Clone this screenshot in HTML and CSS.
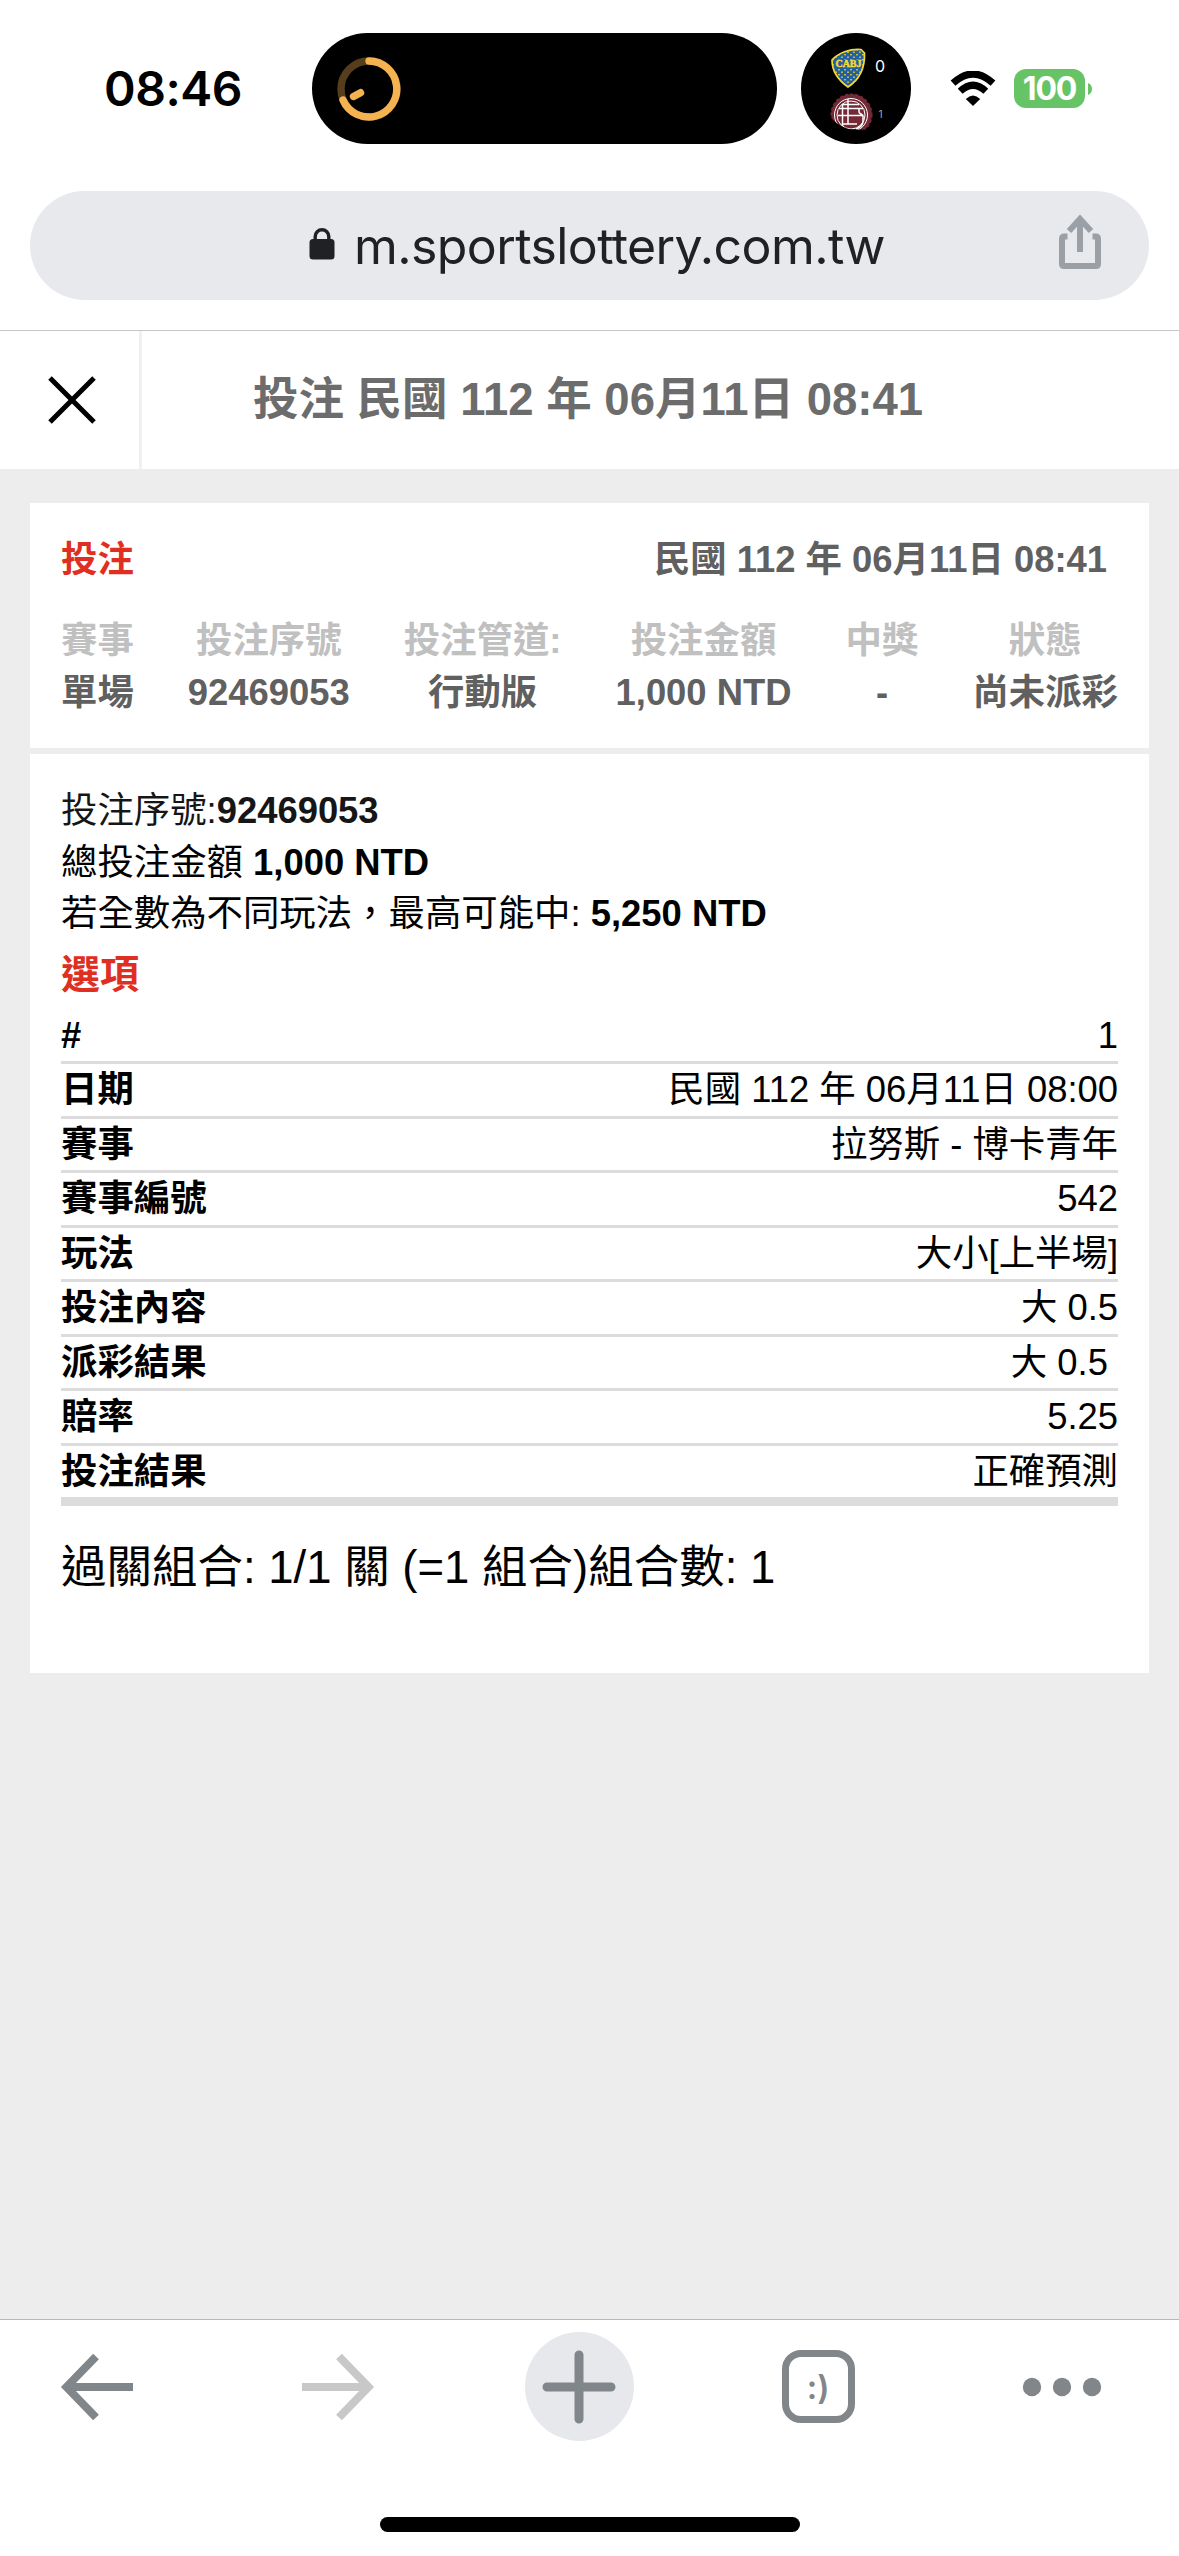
FILE: index.html
```html
<!DOCTYPE html>
<html lang="zh-Hant">
<head>
    <meta charset="UTF-8">
    <meta name="viewport" content="width=device-width, initial-scale=1.0">
    <title>投注</title>
    <link rel="stylesheet" href="styles.css">
</head>
<body>

<div class="status-bar">
    <div class="time">08:46</div>
    <div class="island">
        <svg width="64" height="64" viewBox="0 0 64 64" fill="none" stroke-linecap="round">
            <circle cx="32" cy="32" r="28" stroke="#563d1c" stroke-width="7.4"/>
            <path d="M32 4A28 28 0 1 1 6 43" stroke="#f4b250" stroke-width="7.4"/>
            <path d="M16.5 39.5L23.5 35.7" stroke="#f4b250" stroke-width="7.4"/>
        </svg>
    </div>
    <svg class="match" width="110" height="111" viewBox="0 0 110 111">
        <defs>
            <pattern id="stars" width="6" height="5" patternUnits="userSpaceOnUse">
                <rect width="6" height="5" fill="#23609f"/>
                <rect x="1" y="1" width="2" height="1.4" fill="#c5bd45"/>
                <rect x="4" y="3.5" width="2" height="1.4" fill="#c5bd45"/>
            </pattern>
            <clipPath id="crest-clip"><path d="M28 82C28 68 37 58 52 58H76V96.500H54Q38 96 28 82Z"/></clipPath>
        </defs>
        <ellipse cx="55" cy="55.500" rx="55" ry="55.500" fill="#000"/>
        <path d="M31 27C37 20 49 15.500 60 16.500L63.500 20C64 35 58 47 47 54C37 47 31 37 31 27Z" fill="url(#stars)" stroke="#f3d936" stroke-width="1.700"/>
        <rect x="34" y="26.500" width="27" height="8.500" fill="#23609f"/>
        <text class="crest-name" x="47.500" y="34" text-anchor="middle" textLength="26" lengthAdjust="spacingAndGlyphs">CABJ</text>
        <g clip-path="url(#crest-clip)" fill="none" stroke="#fff">
            <circle cx="50.500" cy="81.500" r="19" fill="#732a36" stroke="#732a36" stroke-width="2.500"/>
            <circle cx="50.500" cy="81.500" r="20.300" stroke="#732a36" stroke-width="1.500" stroke-dasharray="3.200 2"/>
            <circle cx="50" cy="82" r="16.500" stroke-width="1"/>
            <circle cx="50" cy="82" r="14" stroke-width="1"/>
            <path d="M47 66V91M41.500 71.500V93M38 75.500H62M41 71.500H58M58 75.500V79C58 81 62 81 62 83V89Q61 94 55 96M37 82.500H62M41 91H56" stroke-width="1.500"/>
        </g>
        <text class="score" x="79" y="39" text-anchor="middle">0</text>
        <text class="score score-dim" x="79.500" y="85" text-anchor="middle">1</text>
    </svg>
    <svg class="wifi" width="46" height="36" viewBox="0 0 46 36">
        <path d="M3 12.200Q23-6.200 43 12.200" fill="none" stroke="#000" stroke-width="7"/>
        <path d="M10.200 20.300Q23 8.200 35.800 20.300" fill="none" stroke="#000" stroke-width="7"/>
        <path d="M15.800 28Q23 21 30.200 28L23 35Z"/>
    </svg>
    <div class="battery">100</div>
    <svg width="5" height="12" viewBox="0 0 5 12"><path d="M0 0Q4 1.500 4 6T0 12Z" fill="#67c466"/></svg>
</div>

<div class="address-row">
    <div class="address-bar">
        <svg class="lock" width="26" height="32" viewBox="0 0 26 32">
            <path d="M6.200 12V8.500a6.800 6.800 0 0 1 13.600 0V12" fill="none" stroke="#202125" stroke-width="3.400"/>
            <rect x="0.500" y="11" width="25" height="20.500" rx="3.500" fill="#202125"/>
        </svg>
        <span class="url">m.sportslottery.com.tw</span>
        <svg class="share" width="44" height="56" viewBox="0 0 44 56" fill="none" stroke="#9aa0a5" stroke-width="6">
            <path d="M9.500 22.500H6Q4 22.500 4 25V50Q4 52 6 52H38Q40 52 40 50V25Q40 22.500 38 22.500H34.500"/>
            <path d="M22 38V6M11 17L22 5L33 17"/>
        </svg>
    </div>
</div>

<div class="page-header">
    <button class="close">
        <svg width="48" height="48" viewBox="0 0 48 48" stroke="#000" stroke-width="5"><path d="M2 2L46 46M46 2L2 46"/></svg>
    </button>
    <h1>投注 民國 112 年 06月11日 08:41</h1>
</div>

<div class="content">
    <div class="card summary">
        <div class="summary-top">
            <span class="red">投注</span>
            <span>民國 112 年 06月11日 08:41</span>
        </div>
        <div class="summary-cols">
            <div><span class="label">賽事</span><span>單場</span></div>
            <div><span class="label">投注序號</span><span>92469053</span></div>
            <div><span class="label">投注管道:</span><span>行動版</span></div>
            <div><span class="label">投注金額</span><span>1,000 NTD</span></div>
            <div><span class="label">中獎</span><span>-</span></div>
            <div><span class="label">狀態</span><span>尚未派彩</span></div>
        </div>
    </div>

    <div class="card details">
        <p class="serial">投注序號:<b>92469053</b></p>
        <p>總投注金額 <b>1,000 NTD</b></p>
        <p>若全數為不同玩法，最高可能中: <b>5,250 NTD</b></p>
        <h2 class="red">選項</h2>
        <div class="options">
            <div class="option"><b>#</b><span>1</span></div>
            <div class="option"><b>日期</b><span>民國 112 年 06月11日 08:00</span></div>
            <div class="option"><b>賽事</b><span>拉努斯 - 博卡青年</span></div>
            <div class="option"><b>賽事編號</b><span>542</span></div>
            <div class="option"><b>玩法</b><span>大小[上半場]</span></div>
            <div class="option"><b>投注內容</b><span>大 0.5</span></div>
            <div class="option"><b>派彩結果</b><span>大 0.5&nbsp;</span></div>
            <div class="option"><b>賠率</b><span>5.25</span></div>
            <div class="option"><b>投注結果</b><span>正確預測</span></div>
        </div>
        <div class="combo">過關組合: 1/1 關 (=1 組合)組合數: 1</div>
    </div>
</div>

<div class="toolbar">
    <div class="nav">
        <button>
            <svg width="74" height="68" viewBox="0 0 74 68" fill="none" stroke="#80868a" stroke-width="8"><path d="M73 34H9M36 3.500L6.500 34L36 64.500"/></svg>
        </button>
        <button>
            <svg width="74" height="68" viewBox="0 0 74 68" fill="none" stroke="#c8c8c8" stroke-width="8"><path d="M1 34H65M38 3.500L67.500 34L38 64.500"/></svg>
        </button>
        <button class="new-tab">
            <svg width="74" height="74" viewBox="0 0 74 74" stroke="#80868a" stroke-width="9" stroke-linecap="round"><path d="M5 37H69M37 5V69"/></svg>
        </button>
        <button class="tabs">:)</button>
        <button>
            <svg width="80" height="20" viewBox="0 0 80 20" fill="#80868a"><circle cx="10" cy="10" r="9.200"/><circle cx="40" cy="10" r="9.200"/><circle cx="70" cy="10" r="9.200"/></svg>
        </button>
    </div>
    <div class="home-indicator"></div>
</div>

</body>
</html>
```

FILE: styles.css
```css
* {
    box-sizing: border-box;
}

body {
    margin: 0;
    width: 1179px;
    height: 2556px;
    display: flex;
    flex-direction: column;
    overflow: hidden;
    background-color: #fff;
    color: #000;
    font-family: 'Liberation Sans', 'Noto Sans CJK TC', sans-serif;
    font-size: 36.4px;
}

svg {
    display: block;
    flex-shrink: 0;
}

button {
    background: none;
    border: none;
    padding: 0;
    display: flex;
    align-items: center;
    justify-content: center;
}

h1, h2, p {
    margin: 0;
}

/* status bar */
.status-bar {
    height: 144px;
    padding-top: 33px;
    flex-shrink: 0;
    display: flex;
    align-items: center;
}

.time {
    width: 312px;
    padding-left: 104px;
    font-family: Inter, sans-serif;
    font-size: 48px;
    font-weight: 600;
    letter-spacing: -0.5px;
}

.island {
    width: 465px;
    height: 111px;
    padding-left: 25px;
    border-radius: 56px;
    background-color: #000;
    display: flex;
    align-items: center;
}

.match {
    margin-left: 24px;
}

.crest-name {
    font-family: 'Liberation Serif', serif;
    font-size: 10px;
    font-weight: bold;
    fill: #f3d936;
    stroke: #f3d936;
    stroke-width: 0.5px;
}

.score {
    font-family: Inter, sans-serif;
    font-size: 16px;
    fill: #fff;
}

.score-dim {
    font-size: 10px;
    fill: #aaa;
}

.wifi {
    margin-left: 39px;
}

.battery {
    width: 71px;
    height: 39px;
    margin: 0 3px 0 18px;
    border-radius: 12px;
    background-color: #67c466;
    color: #fff;
    font-family: Inter, sans-serif;
    font-size: 32px;
    font-weight: 700;
    line-height: 39px;
    letter-spacing: -1.2px;
    text-align: center;
}

/* address bar */
.address-row {
    height: 187px;
    padding: 47px 30px 0;
    flex-shrink: 0;
    border-bottom: 1px solid #c6c6c6;
}

.address-bar {
    height: 109px;
    padding: 0 47px 0 279px;
    border-radius: 55px;
    background-color: #e8e9ed;
    display: flex;
    align-items: center;
}

.lock {
    margin-right: 19px;
    margin-bottom: 4px;
}

.url {
    font-family: Inter, sans-serif;
    font-size: 50px;
    letter-spacing: -0.6px;
    color: #202125;
}

.share {
    margin-left: auto;
    margin-bottom: 8px;
}

/* page header */
.page-header {
    height: 138px;
    flex-shrink: 0;
    display: flex;
    align-items: center;
}

.close {
    width: 142px;
    height: 138px;
    padding-right: 0;
    border-right: 3px solid #f0f0f0;
    padding-left: 4px;
}

.page-header h1 {
    flex: 1;
    padding-right: 145px;
    font-size: 45.5px;
    line-height: 60px;
    color: #6c6c6c;
    text-align: center;
    white-space: nowrap;
}

/* bet slip */
.content {
    flex: 1;
    padding: 34px 30px 0;
    background-color: #ededed;
}

.card {
    background-color: #fff;
    padding: 0 31px;
}

.red {
    color: #df2f22;
}

.summary {
    height: 245px;
    margin-bottom: 6px;
    padding-top: 31px;
    color: #606060;
    font-weight: bold;
}

.summary-top {
    display: flex;
    justify-content: space-between;
    padding-right: 11px;
    line-height: 52px;
}

.summary-cols {
    display: flex;
    justify-content: space-between;
    margin-top: 29px;
}

.summary-cols div {
    display: flex;
    flex-direction: column;
    align-items: center;
    line-height: 52px;
    white-space: nowrap;
}

.label {
    color: #c0c0c0;
}

.details {
    height: 919px;
    padding-top: 31px;
}

.details p {
    line-height: 51.5px;
}

.details .serial {
    color: #161616;
}

.details h2 {
    font-size: 39px;
    line-height: 70px;
}

.options {
    border-bottom: 6px solid #dcdcdc;
}

.option {
    height: 54.5px;
    border-bottom: 3px solid #dcdcdc;
    display: flex;
    justify-content: space-between;
    line-height: 51.5px;
}

.combo {
    margin-top: 31px;
    font-size: 45.5px;
    line-height: 62px;
}

/* bottom toolbar */
.toolbar {
    height: 237px;
    flex-shrink: 0;
    border-top: 1px solid #b8b8b8;
    background-color: #fff;
}

.nav {
    display: flex;
    align-items: center;
    justify-content: space-between;
    height: 109px;
    margin-top: 12px;
    padding: 0 77px 0 60px;
}

.new-tab {
    width: 109px;
    height: 109px;
    border-radius: 50%;
    background-color: #e7e8ec;
    margin: 0 -19px 0 -18px;
}

.tabs {
    width: 73px;
    height: 73px;
    border: 7.5px solid #80868a;
    border-radius: 19px;
    font-family: Inter, sans-serif;
    font-size: 33px;
    font-weight: 600;
    color: #80868a;
}

.home-indicator {
    width: 420px;
    height: 15px;
    margin: 76px auto 0;
    border-radius: 8px;
    background-color: #000;
}
```
